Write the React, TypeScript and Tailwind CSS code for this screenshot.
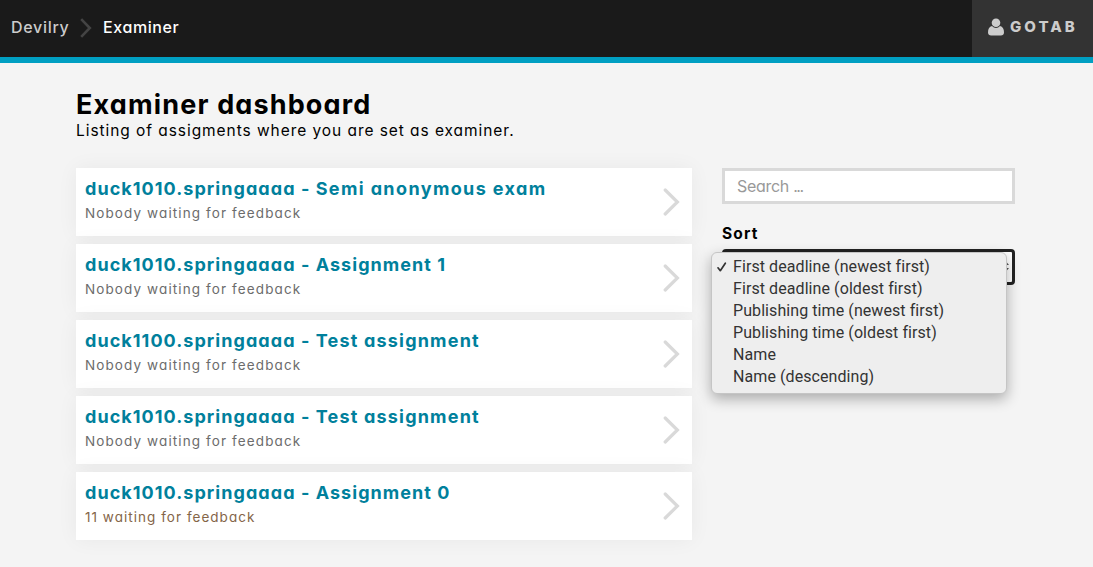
const assignments = [
  { period: "duck1010.springaaaa", name: "Semi anonymous exam", status: "Nobody waiting for feedback", spacing: "tracking-[1.380px]" },
  { period: "duck1010.springaaaa", name: "Assignment 1", status: "Nobody waiting for feedback", spacing: "tracking-[1.050px]" },
  { period: "duck1100.springaaaa", name: "Test assignment", status: "Nobody waiting for feedback", spacing: "tracking-[1.200px]" },
  { period: "duck1010.springaaaa", name: "Test assignment", status: "Nobody waiting for feedback", spacing: "tracking-[1.200px]" },
  { period: "duck1010.springaaaa", name: "Assignment 0", status: "11 waiting for feedback", spacing: "tracking-[1.050px]", waiting: true },
];

const sortOptions = [
  "First deadline (newest first)",
  "First deadline (oldest first)",
  "Publishing time (newest first)",
  "Publishing time (oldest first)",
  "Name",
  "Name (descending)",
];

function Header() {
  return (
    <header className="flex h-[63px] justify-between border-b-[6px] border-[#009fc2] bg-[#1a1a1a]">
      <nav className="flex h-[55px] items-center pl-[11px] text-[16px] font-medium">
        <span className="w-[69px] pb-[2px] whitespace-nowrap tracking-[0.7px] text-[#ccc]">Devilry</span>
        <svg className="h-[20px] w-[12px]" viewBox="0 0 12 20" fill="none" stroke="#444" strokeWidth="2.6">
          <path d="M1.2 1.2 9.8 10 1.2 18.8" />
        </svg>
        <span className="ml-[11px] pb-[2px] whitespace-nowrap tracking-[0.6px] text-white">Examiner</span>
      </nav>
      <div className="flex w-[121px] items-center bg-[#333] pb-[4px] pl-[16px] text-[#ccc]">
        <svg className="h-[18px] w-[16px]" viewBox="0 0 16 18" fill="currentColor">
          <circle cx="8" cy="4.700" r="4.300" />
          <path d="M4 8.1C1.2 8.6 0 11.2 0 14.6 0 16.6 1.3 17.6 3.1 17.6h9.8c1.8 0 3.1-1 3.1-3 0-3.4-1.2-6-4-6.5C10.9 9.300 9.500 10 8 10S5.100 9.300 4 8.100Z" />
        </svg>
        <span className="ml-[6px] pt-[2px] text-[15px] font-extrabold tracking-[3px]">GOTAB</span>
      </div>
    </header>
  );
}

export default function App() {
  return (
    <div className="h-[567px] overflow-hidden bg-[#f4f4f4] font-['Inter','Liberation_Sans',sans-serif] text-black [font-feature-settings:'cv11']">
      <Header />
      <main className="px-[76px] pt-[27px]">
        <h1 className="h-[31px] whitespace-nowrap text-[27px] leading-[29px] font-bold tracking-[1.150px]">Examiner dashboard</h1>
        <p className="h-[20px] whitespace-nowrap text-[15.500px] leading-[20px] tracking-[0.940px]">
          Listing of assigments where you are set as examiner.
        </p>
        <div className="mt-[27px] flex gap-[30px]">
          <ul className="flex w-[616px] flex-col gap-2">
            {assignments.map((item, i) => (
              <li key={i} className="flex h-[68px] items-center justify-between bg-white pr-[12px] pl-[9px] shadow-[0_0_20px_rgba(0,0,0,0.05)]">
                <div className="h-[68px] pt-[8px]">
                  <h2 className="h-[25px] whitespace-nowrap text-[18px] leading-[25px] font-bold tracking-[1.050px] text-[#00809c]">
                    {item.period} - <span className={item.spacing}>{item.name}</span>
                  </h2>
                  <p className={`whitespace-nowrap text-[13.500px] leading-[24px] ${item.waiting ? "tracking-[1.030px] text-[#846548]" : "tracking-[1.110px] text-[#6c6c6c]"}`}>
                    {item.status}
                  </p>
                </div>
                <svg className="h-[28px] w-[17px]" viewBox="0 0 17 28" fill="none" stroke="#d9d9d9" strokeWidth="3.200" strokeLinecap="round">
                  <path d="M2.200 2 14.400 14 2.200 26" />
                </svg>
              </li>
            ))}
          </ul>
          <aside className="w-[293px]">
            <div className="flex h-[36px] items-center border-[3px] border-[#d9d9d9] bg-white pl-[12px] text-[16px] whitespace-pre text-[#999]">
              <span className="tracking-[-0.300px]">Search </span>
              <span className="tracking-[-1.400px]">...</span>
            </div>
            <label className="mt-[20px] block h-[25px] text-[15.500px] leading-[20px] font-bold tracking-[1.200px]">Sort</label>
            <div className="relative h-[36px] rounded-[4px] border-[3px] border-[#222] bg-white">
              <svg className="absolute top-[9px] right-[3px] h-[11px] w-[7px]" viewBox="0 0 7 11" fill="#555">
                <path d="M0 4 3.500 0 7 4ZM0 7 3.500 11 7 7Z" />
              </svg>
              <ul className="absolute top-0 left-[-14px] h-[142px] w-[296px] rounded-[6px] border border-[#c5c5c5] bg-[#eee] pt-[3px] font-['Roboto',sans-serif] text-[16px] tracking-[0.080px] text-[#333] shadow-[0_5px_14px_rgba(0,0,0,0.3)]">
                {sortOptions.map((option, i) => (
                  <li key={option} className="flex h-[22px] items-center whitespace-nowrap">
                    <span className="flex w-[21px] pl-[5px]">
                      {i === 0 && (
                        <svg className="h-[10px] w-[10px]" viewBox="0 0 10 10" fill="none" stroke="currentColor" strokeWidth="1.700" strokeLinecap="round" strokeLinejoin="round">
                          <path d="M1 5.800 3.300 8.700 8.300 1.200" />
                        </svg>
                      )}
                    </span>
                    {option}
                  </li>
                ))}
              </ul>
            </div>
          </aside>
        </div>
      </main>
    </div>
  );
}
